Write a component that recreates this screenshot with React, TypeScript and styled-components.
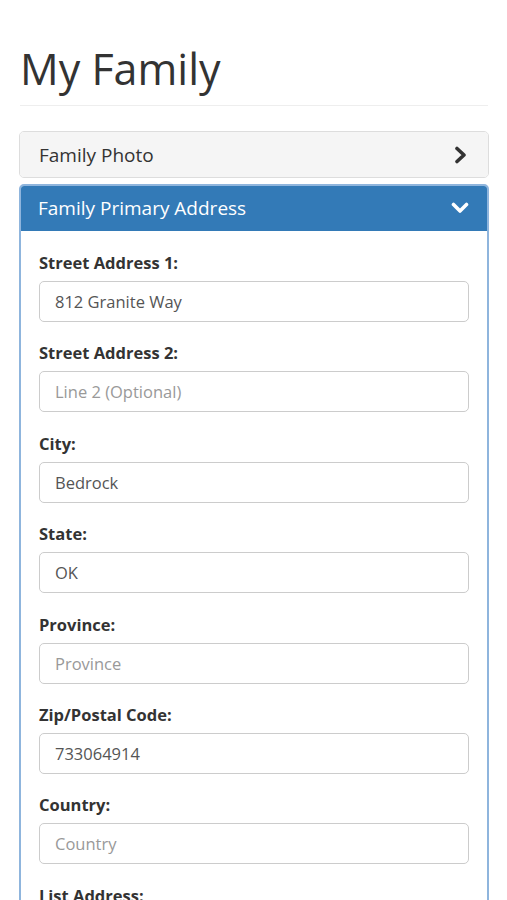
import React from "react";
import styled, { createGlobalStyle } from "styled-components";

const GlobalStyle = createGlobalStyle`
  html, body {
    margin: 0;
    padding: 0;
    background: #fff;
  }
  body {
    font-family: "Open Sans", "Noto Sans", sans-serif;
    color: #333;
  }
  * {
    box-sizing: border-box;
  }
`;

const PageEl = styled.div`
  width: 507px;
  height: 900px;
  overflow: hidden;
  padding: 0 18px;
`;

const TitleEl = styled.h1`
  margin: 0 1px 0 2px;
  padding: 45px 0 13px;
  font-size: 43px;
  font-weight: 400;
  line-height: 47px;
  color: #333;
  border-bottom: 1px solid #eee;
`;

const PanelGroupEl = styled.div`
  margin-top: 25px;
  display: flex;
  flex-direction: column;
  gap: 6px;
`;

const PanelEl = styled.section<{ $open?: boolean }>`
  border: ${({ $open }) => ($open ? "2px solid #8fb5dd" : "1px solid #ddd")};
  border-radius: 5px;
  overflow: hidden;
  margin-left: 1px;
`;

const PanelHeadingEl = styled.div<{ $open?: boolean }>`
  display: flex;
  align-items: center;
  justify-content: space-between;
  height: ${({ $open }) => ($open ? "47px" : "45px")};
  padding: 0 20px 0 19px;
  background: ${({ $open }) => ($open ? "#337ab7" : "#f5f5f5")};
  color: ${({ $open }) => ($open ? "#fff" : "#333")};
  font-size: 19px;
  margin: ${({ $open }) => ($open ? "-2px -2px 0" : "0")};
`;

const PanelBodyEl = styled.div`
  padding: 20px 18px 0;
`;

const FieldEl = styled.div`
  margin-bottom: 19.4px;
`;

const LabelEl = styled.label`
  display: block;
  font-size: 16.5px;
  font-weight: 700;
  line-height: 24px;
  margin-bottom: 6px;
  color: #333;
`;

const InputEl = styled.input`
  display: block;
  width: 100%;
  height: 41px;
  padding: 0 15px;
  border: 1px solid #ccc;
  border-radius: 5px;
  font-family: "Open Sans", "Noto Sans", sans-serif;
  font-size: 16.5px;
  color: #555;
  background: #fff;
  outline: none;

  &::placeholder {
    color: #999;
  }
`;

const ChevronRight = () => (
  <svg width="14" height="18" viewBox="0 0 14 18">
    <polyline
      points="3,2.5 10,9 3,15.5"
      fill="none"
      stroke="#333"
      strokeWidth="3.6"
      strokeLinecap="round"
      strokeLinejoin="round"
    />
  </svg>
);

const ChevronDown = () => (
  <svg width="18" height="14" viewBox="0 0 18 14">
    <polyline
      points="2.5,3.5 9,10 15.5,3.5"
      fill="none"
      stroke="#fff"
      strokeWidth="3.6"
      strokeLinecap="round"
      strokeLinejoin="round"
    />
  </svg>
);

const fields = [
  { label: "Street Address 1:", value: "812 Granite Way", placeholder: "Line 1" },
  { label: "Street Address 2:", value: "", placeholder: "Line 2 (Optional)" },
  { label: "City:", value: "Bedrock", placeholder: "City" },
  { label: "State:", value: "OK", placeholder: "State" },
  { label: "Province:", value: "", placeholder: "Province" },
  { label: "Zip/Postal Code:", value: "733064914", placeholder: "Zip" },
  { label: "Country:", value: "", placeholder: "Country" },
  { label: "List Address:", value: "", placeholder: "" },
];

export default function App() {
  return (
    <>
      <GlobalStyle />
      <PageEl>
        <TitleEl>My Family</TitleEl>
        <PanelGroupEl>
          <PanelEl>
            <PanelHeadingEl>
              <span>Family Photo</span>
              <ChevronRight />
            </PanelHeadingEl>
          </PanelEl>
          <PanelEl $open>
            <PanelHeadingEl $open>
              <span>Family Primary Address</span>
              <ChevronDown />
            </PanelHeadingEl>
            <PanelBodyEl>
              {fields.map((f) => (
                <FieldEl key={f.label}>
                  <LabelEl>{f.label}</LabelEl>
                  <InputEl defaultValue={f.value} placeholder={f.placeholder} />
                </FieldEl>
              ))}
            </PanelBodyEl>
          </PanelEl>
        </PanelGroupEl>
      </PageEl>
    </>
  );
}
